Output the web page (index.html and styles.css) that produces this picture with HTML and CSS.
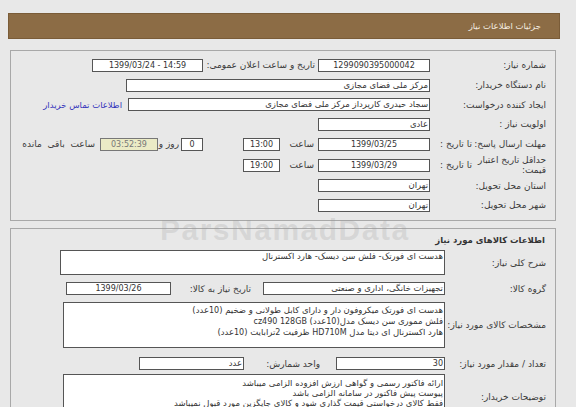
FILE: index.html
```html
<!DOCTYPE html>
<html lang="fa" dir="rtl">
<head>
<meta charset="utf-8">
<title>جزئیات اطلاعات نیاز</title>
<link rel="stylesheet" href="styles.css">
</head>
<body>
<div class="page">
  <div class="header">جزئیات اطلاعات نیاز</div>

  <div class="panel p1">
    <div class="row r1">
      <div class="lbl">شماره نیاز:</div>
      <div class="box c w112 num">1299090395000042</div>
      <div class="lbl2">تاریخ و ساعت اعلان عمومی:</div>
      <div class="box c w111 ltr num">1399/03/24 - 14:59</div>
    </div>
    <div class="row r2">
      <div class="lbl">نام دستگاه خریدار:</div>
      <div class="box w304">مرکز ملی فضای مجازی</div>
    </div>
    <div class="row r3">
      <div class="lbl">ایجاد کننده درخواست:</div>
      <div class="box w302">سجاد حیدری کارپرداز مرکز ملی فضای مجازی</div>
      <a class="link" href="#">اطلاعات تماس خریدار</a>
    </div>
    <div class="row r4">
      <div class="lbl">اولویت نیاز :</div>
      <div class="box w112">عادی</div>
    </div>
    <div class="row r5">
      <div class="lbl split"><span class="main">مهلت ارسال پاسخ:</span><span class="sub">تا تاریخ :</span></div>
      <div class="box c w112 num">1399/03/25</div>
      <div class="lbl3">ساعت</div>
      <div class="box c w37 num">13:00</div>
      <div class="box c w22 ml num">0</div>
      <div class="lbl4">روز و</div>
      <div class="box c w58 timer num">03:52:39</div>
      <div class="lbl5">ساعت باقی مانده</div>
    </div>
    <div class="row r6">
      <div class="lbl split"><span class="main two">حداقل تاریخ اعتبار<br>قیمت:</span><span class="sub">تا تاریخ :</span></div>
      <div class="box c w112 num">1399/03/29</div>
      <div class="lbl3">ساعت</div>
      <div class="box c w37 num">19:00</div>
    </div>
    <div class="row r7">
      <div class="lbl">استان محل تحویل:</div>
      <div class="box w112">تهران</div>
    </div>
    <div class="row r8">
      <div class="lbl">شهر محل تحویل:</div>
      <div class="box w112">تهران</div>
    </div>
  </div>

  <div class="panel p2">
    <div class="title">اطلاعات کالاهای مورد نیاز</div>
    <div class="row q1">
      <div class="lbl">شرح کلی نیاز:</div>
      <div class="box area1">هدست ای فورتک- فلش سن دیسک- هارد اکسترنال</div>
    </div>
    <div class="row q2">
      <div class="lbl">گروه کالا:</div>
      <div class="box w182">تجهیزات خانگی، اداری و صنعتی</div>
      <div class="lbl6">تاریخ نیاز به کالا:</div>
      <div class="box c w105 num">1399/03/26</div>
    </div>
    <div class="row q3">
      <div class="lbl">مشخصات کالای مورد نیاز:</div>
      <div class="box area2">هدست ای فورتک میکروفون دار و دارای کابل طولانی و ضخیم (<span class="num">10</span>عدد)<br>فلش مموری سن دیسک مدل(<span class="num">10</span>عدد) <span class="num">cz490 128GB</span><br>هارد اکسترنال ای دیتا مدل <span class="num">HD710M</span> ظرفیت <span class="num">2</span>ترابایت (<span class="num">10</span>عدد)</div>
    </div>
    <div class="row q4">
      <div class="lbl">تعداد / مقدار مورد نیاز:</div>
      <div class="box w109 num">30</div>
      <div class="lbl7">واحد شمارش:</div>
      <div class="box w105">عدد</div>
    </div>
    <div class="row q5">
      <div class="lbl">توضیحات خریدار:</div>
      <div class="box area3">ارائه فاکتور رسمی و گواهی ارزش افزوده الزامی میباشد<br>پیوست پیش فاکتور در سامانه الزامی باشد<br>فقط کالای درخواستی قیمت گذاری شود و کالای جایگزین مورد قبول نمیباشد</div>
    </div>
  </div>

  <div class="watermark">ParsNamadData</div>
</div>
</body>
</html>
```

FILE: styles.css
```css
html, body {
  margin: 0;
  padding: 0;
  background: #e8e8e8;
}
body {
  font-family: "DejaVu Sans", sans-serif;
  font-size: 8.5px;
  color: #333;
  direction: rtl;
  overflow: hidden;
}
.page {
  position: relative;
  width: 576px;
  height: 407px;
  overflow: hidden;
  padding-top: 13px;
  box-sizing: border-box;
}
.header {
  margin: 0 16px 0 8px;
  height: 26px;
  box-sizing: border-box;
  background: #8c6c45;
  border: 1px solid #7a5c38;
  color: #f4ece0;
  font-size: 8.5px;
  line-height: 24px;
  padding-right: 18px;
}
.panel {
  margin: 0 20px 0 10px;
  border: 1px solid #a8a8a8;
  box-sizing: border-box;
  padding-right: 9px;
}
.p1 {
  margin-top: 11px;
  height: 171px;
  padding-top: 4.7px;
}
.p2 {
  margin-top: 7px;
  height: 200px;
  padding-top: 2px;
}
.row {
  display: flex;
  align-items: center;
  height: 19.6px;
}
.r5 { height: 20.3px; }
.r6 { height: 21.7px; }
.lbl {
  width: 116px;
  flex: none;
  color: #3a3a3a;
  white-space: nowrap;
  font-size: 9px;
}
.p2 .lbl { width: 101px; }
.split {
  display: flex;
  align-items: center;
}
.split .main {
  width: 74px;
  flex: none;
}
.split .main.two {
  line-height: 10px;
}
.split .sub {
  flex: none;
}
.box {
  flex: none;
  box-sizing: border-box;
  height: 13px;
  background: #fff;
  border: 1px solid #555;
  line-height: 11px;
  padding: 0 1px;
  white-space: nowrap;
  overflow: hidden;
  color: #333;
}
.num { font-size: 8px; }
.c { text-align: center; }
.ltr { direction: ltr; }
.w112 { width: 112px; }
.w111 { width: 111px; }
.w304 { width: 304px; }
.w302 { width: 302px; }
.w37 { width: 37px; }
.w22 { width: 22px; }
.w58 { width: 58px; }
.w182 { width: 182px; }
.w105 { width: 105px; }
.w109 { width: 109px; }
.ml { margin-right: 40px; }
.timer {
  background: #ebebc6;
  border-color: #777;
  color: #777;
}
.lbl2 {
  width: 112px;
  margin: 0 3px 0 0;
  flex: none;
  white-space: nowrap;
  overflow: hidden;
  font-size: 9px;
  color: #3a3a3a;
}
.lbl3 {
  width: 34px;
  padding-right: 4px;
  flex: none;
  font-size: 9px;
  color: #3a3a3a;
}
.lbl4 {
  width: 21px;
  padding-right: 2px;
  flex: none;
  white-space: nowrap;
  font-size: 9px;
  color: #3a3a3a;
}
.lbl5 {
  margin-right: 5px;
  white-space: nowrap;
  font-size: 9px;
  word-spacing: 3px;
  color: #3a3a3a;
}
.lbl6 {
  width: 80px;
  padding-right: 12px;
  flex: none;
  white-space: nowrap;
  font-size: 9px;
  color: #3a3a3a;
}
.lbl7 {
  width: 76px;
  padding-right: 16px;
  flex: none;
  white-space: nowrap;
  font-size: 9px;
  color: #3a3a3a;
}
.link {
  margin-right: 6px;
  color: #3333bb;
  text-decoration: none;
  white-space: nowrap;
}
.title {
  height: 19px;
  line-height: 19px;
  font-weight: bold;
  font-size: 8.5px;
  color: #333;
  padding-right: 1px;
}
.q1 { height: 25px; margin-top: 0; }
.area1 {
  width: 385px;
  height: 25px;
  white-space: normal;
}
.q2 { height: 13px; margin-top: 7px; }
.q3 { height: 46px; margin-top: 7px; }
.area2 {
  width: 382px;
  height: 46px;
  padding-top: 2px;
  white-space: nowrap;
}
.q4 { height: 13px; margin-top: 9px; }
.q5 { height: 46px; margin-top: 4px; }
.area3 {
  width: 382px;
  height: 46px;
  padding-top: 3px;
  line-height: 10px;
}
.watermark {
  position: absolute;
  left: 160px;
  top: 213px;
  font-family: "Liberation Sans", sans-serif;
  font-weight: bold;
  font-size: 30px;
  line-height: 1.15;
  color: rgba(150, 150, 150, 0.22);
  direction: ltr;
  letter-spacing: 1.5px;
  pointer-events: none;
}
```
